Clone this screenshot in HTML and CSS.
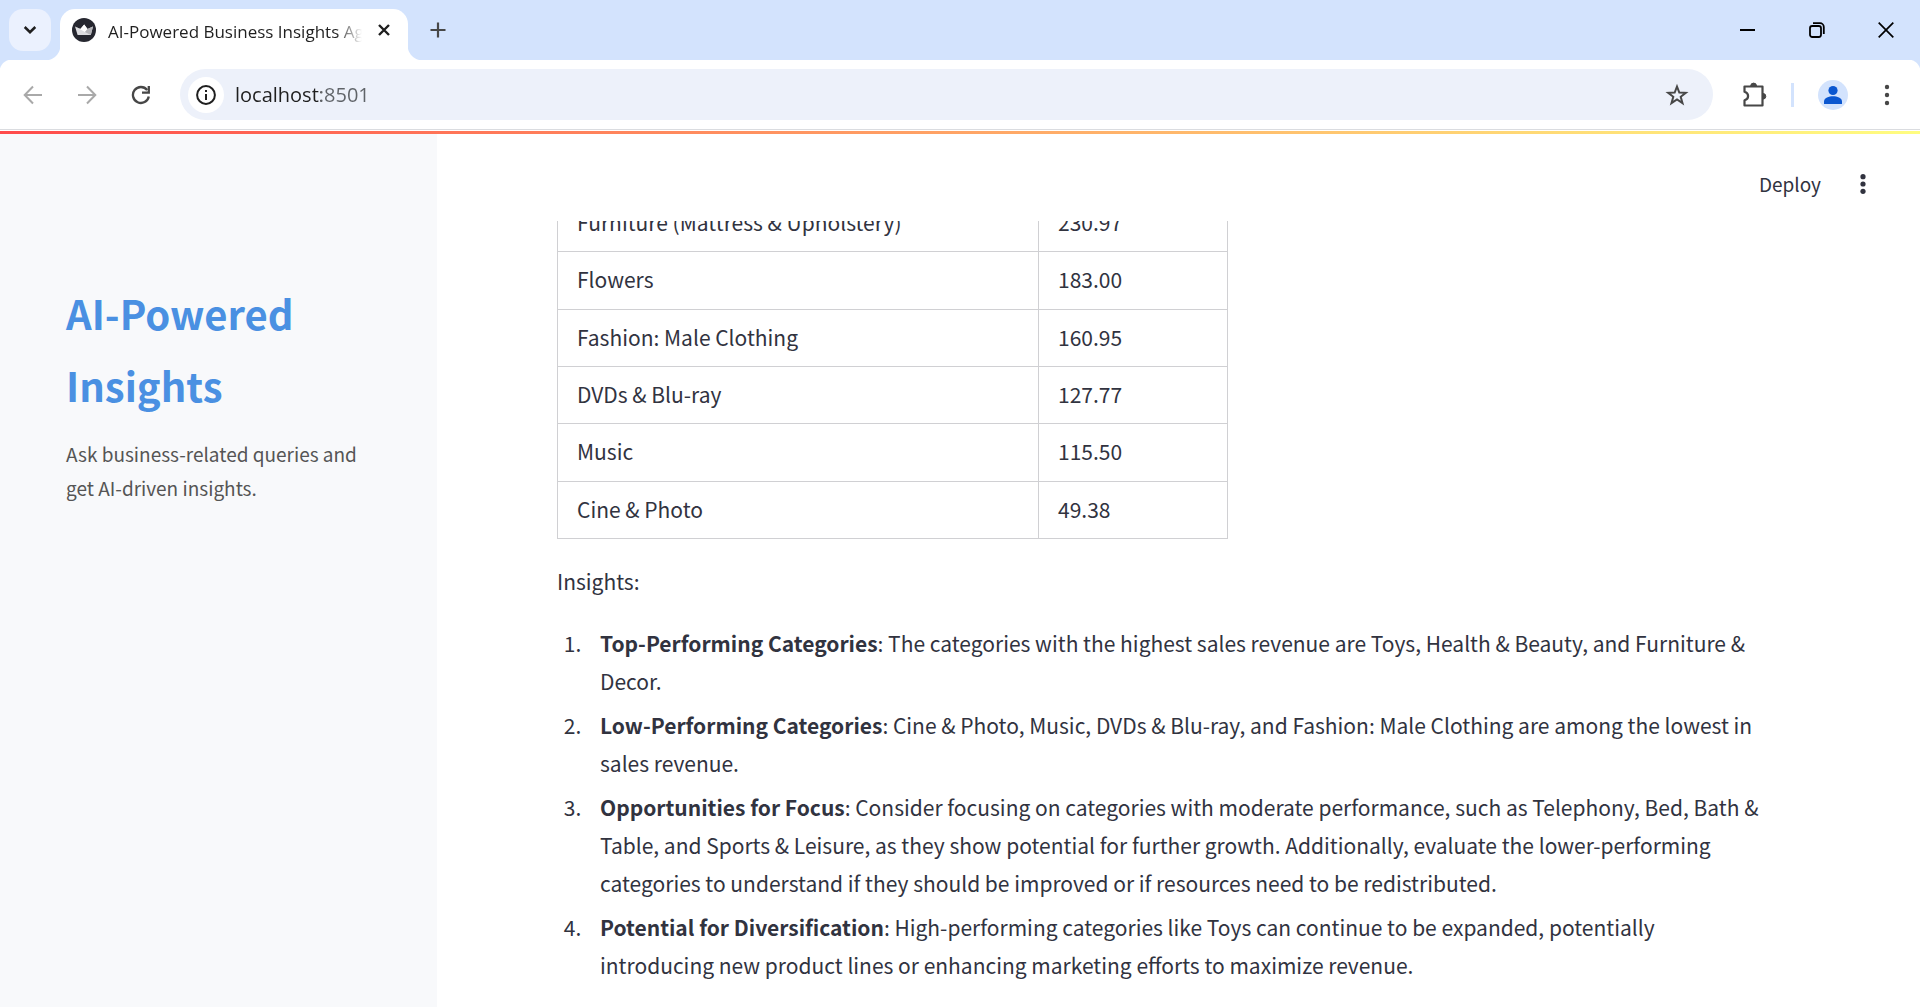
FILE: index.html
```html
<!DOCTYPE html>
<html lang="en">
<head>
<meta charset="utf-8">
<title>AI-Powered Business Insights Agent</title>
<link rel="stylesheet" href="styles.css">
</head>
<body>
<div class="window">
  <header class="tabstrip">
    <button class="tab-search" aria-label="Search tabs"><svg width="14" height="10" viewBox="0 0 14 10"><path d="M1.700 2 7 7.200 12.300 2" fill="none" stroke="#1f1f1f" stroke-width="2.500"/></svg></button>
    <div class="tab">
      <svg class="favicon" width="24" height="24" viewBox="0 0 24 24"><circle cx="12" cy="12" r="12" fill="#262730"/><path d="M3 8.500 8.300 11 12.200 6.500l3.300 4.500L21 8.500 18.800 17H5.600Z" fill="#dcdce0"/><path d="M3 8.500 8.300 11 12.200 6.500 15.500 11 13 14Z" fill="#fff"/><path d="M15.500 11 21 8.500 18.800 17 13 14Z" fill="#b4b4b9"/></svg>
      <span class="tab-title">AI-Powered Business Insights Agent</span>
      <button class="tab-close" aria-label="Close tab"><svg width="12" height="12" viewBox="0 0 12 12"><path d="M1 1l10 10M11 1 1 11" stroke="#1f1f1f" stroke-width="2.400"/></svg></button>
    </div>
    <button class="new-tab" aria-label="New tab"><svg width="16" height="16" viewBox="0 0 16 16"><path d="M8 0.500v15M.5 8h15" stroke="#474747" stroke-width="2.200"/></svg></button>
    <div class="window-controls">
      <button aria-label="Minimize"><svg width="16" height="16" viewBox="0 0 16 16"><path d="M0 8h15" stroke="#000" stroke-width="2"/></svg></button>
      <button aria-label="Restore"><svg width="16" height="16" viewBox="0 0 16 16"><g fill="none" stroke="#000" stroke-width="1.800"><rect x="1" y="4" width="11" height="11" rx="2.200"/><path d="M4 1.200h7a3.800 3.800 0 0 1 3.800 3.800v7"/></g></svg></button>
      <button aria-label="Close"><svg width="16" height="16" viewBox="0 0 16 16"><path d="M.7.7l14.600 14.600M15.300.7.7 15.300" stroke="#000" stroke-width="1.700"/></svg></button>
    </div>
  </header>
  <nav class="toolbar">
    <div class="nav-buttons">
      <button aria-label="Back"><svg width="20" height="20" viewBox="0 0 20 20"><path d="M19 10H2.500M10 1.500 1.700 10 10 18.500" fill="none" stroke="#a9a9a9" stroke-width="2"/></svg></button>
      <button aria-label="Forward"><svg width="20" height="20" viewBox="0 0 20 20"><path d="M1 10h16.500M10 1.500 18.300 10 10 18.500" fill="none" stroke="#a9a9a9" stroke-width="2"/></svg></button>
      <button aria-label="Reload"><svg width="20" height="20" viewBox="0 0 20 20"><path d="M17.800 11.500A8 8 0 1 1 16.200 5" fill="none" stroke="#474747" stroke-width="2.300"/><path d="M17.800 1v6.600H11" fill="none" stroke="#474747" stroke-width="2.300"/></svg></button>
    </div>
    <div class="omnibox">
      <button class="site-info" aria-label="View site information"><svg width="20" height="20" viewBox="0 0 20 20"><circle cx="10" cy="10" r="8.900" fill="none" stroke="#1f1f1f" stroke-width="2"/><path d="M10 9v6M10 5v2" stroke="#1f1f1f" stroke-width="2"/></svg></button>
      <input class="url" type="text" value="localhost:8501" aria-label="Address and search bar">
      <button class="bookmark" aria-label="Bookmark this page"><svg width="24" height="24" viewBox="0 0 24 24"><path d="M12 3.500l2.300 6 6.500.3-5.100 4 1.800 6.300L12 16.500l-5.500 3.600 1.800-6.300-5.100-4 6.500-.3Z" fill="none" stroke="#474747" stroke-width="2"/></svg></button>
    </div>
    <div class="actions">
      <button aria-label="Extensions"><svg width="26" height="26" viewBox="0 0 26 26"><path d="M3.500 4.500h18v19h-18v-5.200c4.800-1.300 4.800-7.200 0-8.600Z" fill="none" stroke="#474747" stroke-width="2.200" stroke-linejoin="round"/><path d="M9.700 4a2.900 2.900 0 0 1 5.800 0ZM22 11.500a2.800 2.800 0 0 1 0 5.600Z" fill="#474747" stroke="#474747"/></svg></button>
      <span class="divider"></span>
      <button class="profile" aria-label="Profile"><svg width="30" height="30" viewBox="0 0 30 30"><circle cx="15" cy="15" r="15" fill="#d3e3fd"/><circle cx="15" cy="10.500" r="4.600" fill="#0b57d0"/><path d="M6 24v-2.500c0-3.700 5-5.200 9-5.200s9 1.500 9 5.200V24Z" fill="#0b57d0"/></svg></button>
      <button aria-label="Browser menu"><svg width="6" height="22" viewBox="0 0 6 22"><g fill="#474747"><circle cx="3" cy="3" r="2.200"/><circle cx="3" cy="11" r="2.200"/><circle cx="3" cy="19" r="2.200"/></g></svg></button>
    </div>
  </nav>
  <div class="decoration"></div>
  <div class="app">
    <aside class="sidebar">
      <h1>AI-Powered Insights</h1>
      <p>Ask business-related queries and get AI-driven insights.</p>
    </aside>
    <main class="main">
      <div class="app-header">
        <button class="deploy">Deploy</button>
        <button aria-label="Main menu"><svg width="6" height="20" viewBox="0 0 6 20"><g fill="#31333f"><circle cx="3" cy="2.700" r="2.600"/><circle cx="3" cy="10" r="2.600"/><circle cx="3" cy="17.300" r="2.600"/></g></svg></button>
      </div>
      <div class="scroll">
        <table class="sales">
          <tbody>
            <tr><td>Furniture (Mattress &amp; Upholstery)</td><td>230.97</td></tr>
            <tr><td>Flowers</td><td>183.00</td></tr>
            <tr><td>Fashion: Male Clothing</td><td>160.95</td></tr>
            <tr><td>DVDs &amp; Blu-ray</td><td>127.77</td></tr>
            <tr><td>Music</td><td>115.50</td></tr>
            <tr><td>Cine &amp; Photo</td><td>49.38</td></tr>
          </tbody>
        </table>
        <p>Insights:</p>
        <ol class="insights">
          <li><strong>Top-Performing Categories</strong>: The categories with the highest sales revenue are Toys, Health &amp; Beauty, and Furniture &amp; Decor.</li>
          <li><strong>Low-Performing Categories</strong>: Cine &amp; Photo, Music, DVDs &amp; Blu-ray, and Fashion: Male Clothing are among the lowest in sales revenue.</li>
          <li><strong>Opportunities for Focus</strong>: Consider focusing on categories with moderate performance, such as Telephony, Bed, Bath &amp; Table, and Sports &amp; Leisure, as they show potential for further growth. Additionally, evaluate the lower-performing categories to understand if they should be improved or if resources need to be redistributed.</li>
          <li><strong>Potential for Diversification</strong>: High-performing categories like Toys can continue to be expanded, potentially introducing new product lines or enhancing marketing efforts to maximize revenue.</li>
        </ol>
      </div>
    </main>
  </div>
</div>
</body>
</html>
```
FILE: styles.css
```css
* { box-sizing: border-box; }

body {
  margin: 0;
  background: #fff;
  color: #31333f;
  font: 21px/38px "Noto Sans CJK SC", sans-serif;
}

button {
  display: flex;
  align-items: center;
  justify-content: center;
  padding: 0;
  border: 0;
  background: none;
  color: inherit;
  font: inherit;
}

svg { display: block; flex: none; }

.window {
  display: flex;
  flex-direction: column;
  height: 100vh;
  overflow: hidden;
}

/* Tab strip */
.tabstrip {
  display: flex;
  flex: none;
  height: 60px;
  padding: 9px 0 0 9px;
  background: #d3e3fd;
}

.tab-search {
  width: 42px;
  height: 42px;
  border-radius: 14px;
  background: #ebf1fe;
}

.tab {
  position: relative;
  display: flex;
  align-items: center;
  gap: 12px;
  width: 348px;
  height: 51px;
  margin-left: 9px;
  padding: 0 17px 9px 12px;
  border-radius: 15px 15px 0 0;
  background: #fff;
}

.tab::before,
.tab::after {
  content: "";
  position: absolute;
  bottom: 0;
  width: 15px;
  height: 15px;
}

.tab::before {
  right: 100%;
  background: radial-gradient(circle at 0 0, transparent 15px, #fff 16px);
}

.tab::after {
  left: 100%;
  background: radial-gradient(circle at 100% 0, transparent 15px, #fff 16px);
}

.tab-title {
  flex: 1;
  padding-top: 3px;
  overflow: hidden;
  color: #1f1f1f;
  font: 17px/26px "Open Sans", sans-serif;
  white-space: nowrap;
  -webkit-mask-image: linear-gradient(90deg, #000 228px, transparent 254px);
  mask-image: linear-gradient(90deg, #000 228px, transparent 254px);
}

.tab-close { width: 14px; height: 24px; }

.new-tab {
  width: 42px;
  height: 42px;
  margin-left: 9px;
}

.window-controls {
  display: flex;
  margin-left: auto;
}

.window-controls button {
  width: 69px;
  height: 42px;
}

/* Toolbar */
.toolbar {
  display: flex;
  flex: none;
  align-items: center;
  height: 70px;
  padding: 0 30px 0 23px;
  border-bottom: 1px solid #dadce0;
  background: radial-gradient(circle at 12px 12px, #fff 12px, #d3e3fd 13px) 0 0 / 12px 12px no-repeat,
    radial-gradient(circle at 0 12px, #fff 12px, #d3e3fd 13px) 100% 0 / 12px 12px no-repeat,
    #fff;
}

.nav-buttons {
  display: flex;
  gap: 34px;
  margin-right: 29px;
}

.omnibox {
  display: flex;
  flex: 1;
  align-items: center;
  height: 51px;
  padding: 0 24px 0 8px;
  border-radius: 26px;
  background: #edf1fa;
}

.site-info {
  width: 36px;
  height: 36px;
  border-radius: 50%;
  background: #fff;
}

.url {
  flex: 1;
  min-width: 0;
  margin-left: 11px;
  padding: 0;
  border: 0;
  outline: 0;
  background: linear-gradient(90deg, #1f1f1f 86px, #5f6368 86px);
  -webkit-background-clip: text;
  background-clip: text;
  color: transparent;
  font: 20px/28px "Open Sans", sans-serif;
}

.actions {
  display: flex;
  align-items: center;
  margin-left: 28px;
}

.divider {
  width: 3px;
  height: 24px;
  margin: 0 24px;
  background: #d3e3fd;
}

.profile { margin-right: 36px; }

/* App */
.decoration {
  flex: none;
  height: 4px;
  border-top: 1px solid #fff;
  background: linear-gradient(90deg, #ff4b4b, #fffd80);
}

.app {
  display: flex;
  flex: 1;
  min-height: 0;
}

.sidebar {
  flex: none;
  width: 437px;
  padding: 143px 66px 0;
  background: #f8f9fb;
}

.sidebar h1 {
  margin: 0 0 16px;
  color: #4a90e2;
  font-size: 40px;
  line-height: 72px;
}

.sidebar p {
  margin: 0;
  color: #555;
  font-size: 19px;
  line-height: 34px;
}

.main {
  display: flex;
  flex: 1;
  flex-direction: column;
  min-width: 0;
}

.app-header {
  display: flex;
  flex: none;
  align-items: center;
  justify-content: flex-end;
  gap: 39px;
  height: 87px;
  padding: 13px 54px 0;
}

.deploy { font-size: 19px; }

.scroll {
  flex: 1;
  min-height: 0;
  padding: 0 152px 0 120px;
  overflow: hidden;
}

/* The first visible row is partly scrolled under the header */
.sales {
  width: 671px;
  height: 345px;
  margin: -27px 0 23px;
  border-collapse: collapse;
}

.sales td {
  padding: 8px 19px 10px;
  border: 1px solid #d0d0d3;
}

.sales td:last-child { width: 189px; }

.scroll p { margin: 0 0 24px; }

.insights {
  margin: 0;
  padding: 0;
}

.insights li {
  margin: 0 0 6px 29px;
  padding-left: 14px;
}

.insights strong { font-weight: 600; }
```
